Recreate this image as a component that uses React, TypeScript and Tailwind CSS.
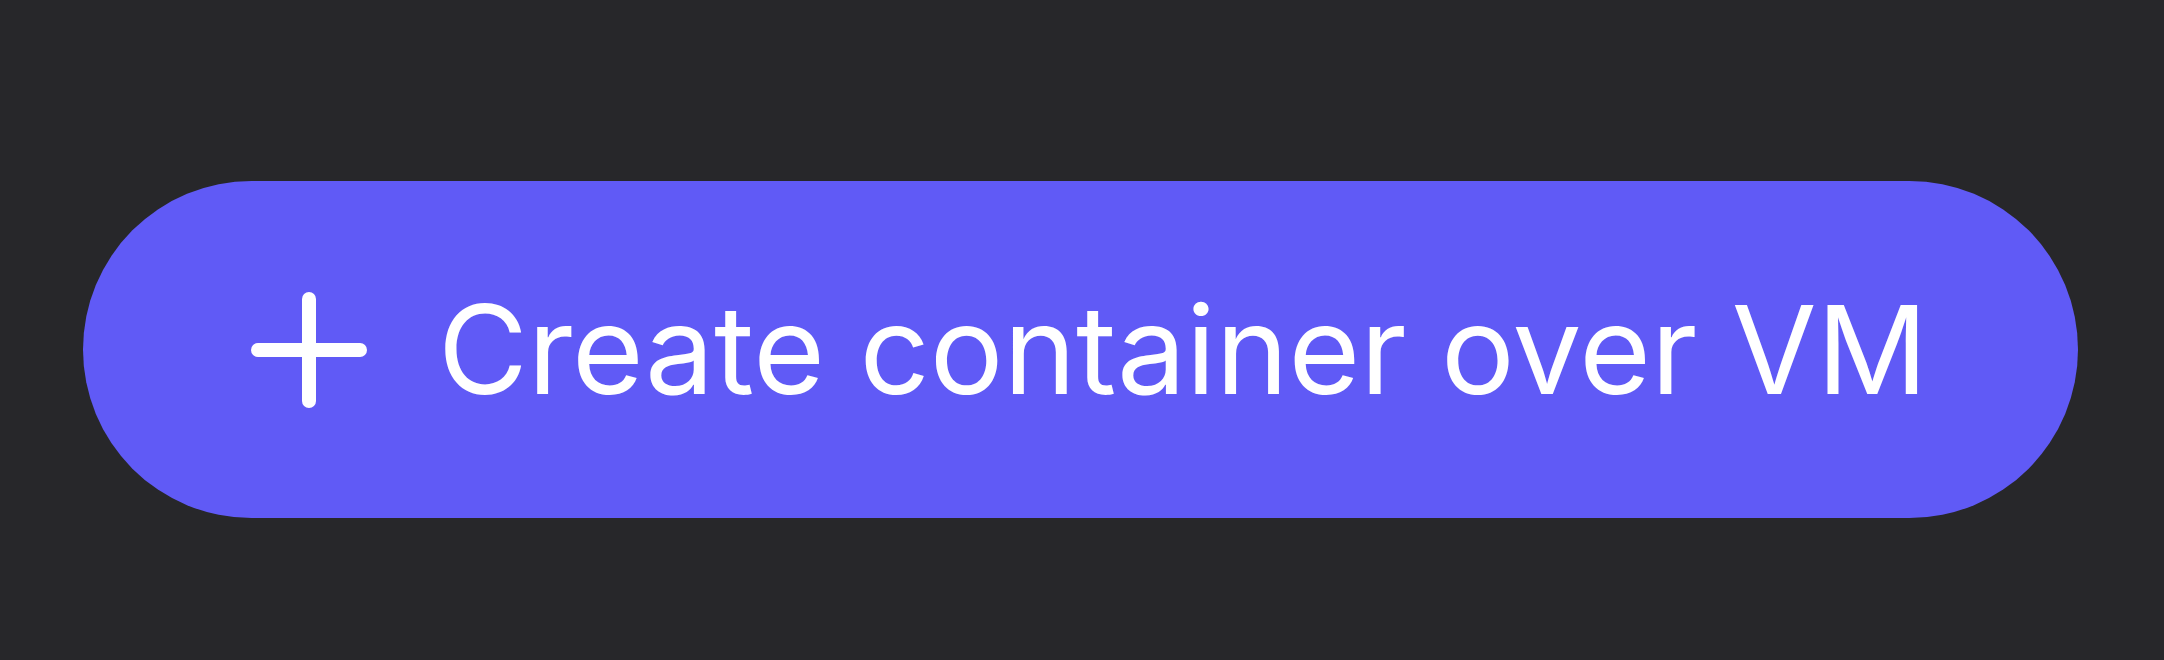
export default function App() {
  return (
    <div className="h-[660px] w-[2164px] bg-[#27272a] pl-[83px] pt-[181px]">
      <button
        type="button"
        className="flex h-[337px] w-[1995px] items-center gap-[71px] rounded-full bg-[#605af6] pl-[168px] text-white"
      >
        <svg
          width="116"
          height="116"
          viewBox="0 0 116 116"
          fill="none"
          stroke="currentColor"
          strokeWidth="14"
          strokeLinecap="round"
        >
          <line x1="58" y1="7" x2="58" y2="109" />
          <line x1="7" y1="58" x2="109" y2="58" />
        </svg>
        <span className="font-['Inter',sans-serif] text-[123px] leading-none font-normal">
          Create container over VM
        </span>
      </button>
    </div>
  )
}
